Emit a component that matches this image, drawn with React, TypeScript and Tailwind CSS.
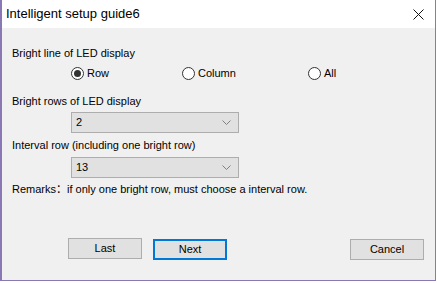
import { useState } from "react";

const font = { fontFamily: "'Liberation Sans', 'Noto Sans CJK SC', sans-serif" };

function Radio({ checked, label, onClick }: { checked: boolean; label: string; onClick: () => void }) {
  return (
    <button type="button" onClick={onClick} className="flex items-center gap-[3px] h-[14px]">
      <span className="w-[13px] h-[13px] rounded-full border border-[#333333] bg-white flex items-center justify-center">
        {checked && <span className="w-[7px] h-[7px] rounded-full bg-[#333333]" />}
      </span>
      <span className="text-[11px] leading-[13px] text-black">{label}</span>
    </button>
  );
}

function Select({ value }: { value: string }) {
  return (
    <div className="ml-[59px] w-[168px] h-[21px] bg-[#e1e1e1] border border-[#adadad] flex items-center justify-between pl-[4px] pr-[7px]">
      <span className="text-[11px] leading-[13px] text-black">{value}</span>
      <svg width="9" height="5" viewBox="0 0 9 5" fill="none" stroke="#808080" strokeWidth="1">
        <path d="M0.5 0.5 L4.5 4.5 L8.5 0.5" />
      </svg>
    </div>
  );
}

function Btn({ label, focused }: { label: string; focused?: boolean }) {
  return (
    <button
      type="button"
      className={
        focused
          ? "w-[74px] h-[21px] bg-[#e1e1e1] border-2 border-[#0078d7] text-[11px] leading-[13px] text-black"
          : "w-[74px] h-[21px] bg-[#e1e1e1] border border-[#adadad] text-[11px] leading-[13px] text-black"
      }
    >
      {label}
    </button>
  );
}

export default function App() {
  const [mode, setMode] = useState("row");

  return (
    <div className="w-[437px] h-[283px] bg-white overflow-hidden" style={font}>
      <div className="w-[436px] h-[281px] border-l-2 border-r border-b border-[#8a78b4] flex flex-col">
        {/* Title bar */}
        <div className="h-[28px] bg-white flex items-center justify-between pl-[4px] pr-[11px] shrink-0">
          <span className="text-[13px] text-black">Intelligent setup guide6</span>
          <svg width="11" height="11" viewBox="0 0 11 11" stroke="#111" strokeWidth="1">
            <path d="M0.5 0.5 L10.5 10.5 M10.5 0.5 L0.5 10.5" />
          </svg>
        </div>

        {/* Body */}
        <div className="flex-1 bg-[#f0f0f0] flex flex-col pl-[10px] pt-[19px]">
          <div className="text-[11px] leading-[13px] text-black">Bright line of LED display</div>

          <div className="flex items-center mt-[6px] pl-[59px]">
            <div className="w-[111px]">
              <Radio checked={mode === "row"} label="Row" onClick={() => setMode("row")} />
            </div>
            <div className="w-[126px]">
              <Radio checked={mode === "col"} label="Column" onClick={() => setMode("col")} />
            </div>
            <Radio checked={mode === "all"} label="All" onClick={() => setMode("all")} />
          </div>

          <div className="text-[11px] leading-[13px] text-black mt-[15px]">Bright rows of LED display</div>
          <div className="mt-[4px]">
            <Select value="2" />
          </div>

          <div className="text-[11px] leading-[13px] text-black mt-[6px]">Interval row (including one bright row)</div>
          <div className="mt-[5px]">
            <Select value="13" />
          </div>

          <div className="text-[11px] leading-[13px] text-black mt-[5px]">
            Remarks：if only one bright row, must choose a interval row.
          </div>

          <div className="flex items-center mt-[40px] pl-[56px]">
            <Btn label="Last" />
            <div className="ml-[11px]">
              <Btn label="Next" focused />
            </div>
            <div className="ml-[123px]">
              <Btn label="Cancel" />
            </div>
          </div>
        </div>
      </div>
    </div>
  );
}
